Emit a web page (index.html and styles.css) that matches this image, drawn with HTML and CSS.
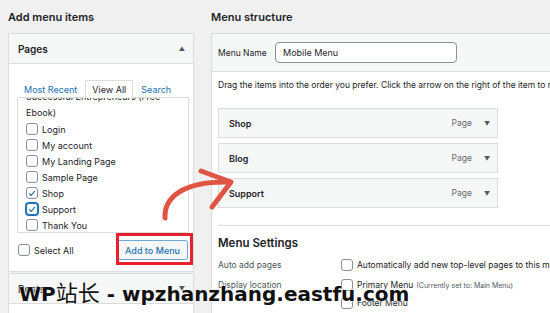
FILE: index.html
```html
<!DOCTYPE html>
<html lang="en">
<head>
    <meta charset="UTF-8">
    <title>Menus</title>
    <link rel="stylesheet" href="styles.css">
</head>
<body>
    <div class="screen">
        <section class="col-left">
            <h2 class="col-title">Add menu items</h2>

            <div class="accordion">
                <div class="acc-head">
                    <span>Pages</span>
                    <span class="caret">&#9650;</span>
                </div>
                <div class="acc-body">
                    <ul class="tabs">
                        <li class="tab-link">Most Recent</li>
                        <li class="tab-active">View All</li>
                        <li class="tab-link">Search</li>
                    </ul>
                    <div class="checklist">
                        <ul class="checklist-inner">
                            <li class="wrap-item">How to Become one of the<br>Successful Entrepreneurs (Free<br>Ebook)</li>
                            <li><span class="cb"></span>Login</li>
                            <li><span class="cb"></span>My account</li>
                            <li><span class="cb"></span>My Landing Page</li>
                            <li><span class="cb"></span>Sample Page</li>
                            <li><span class="cb checked"><svg viewBox="0 0 12 12"><path d="M3 6.2l2 2.2 4-5"/></svg></span>Shop</li>
                            <li><span class="cb checked focus"><svg viewBox="0 0 12 12"><path d="M3 6.2l2 2.2 4-5"/></svg></span>Support</li>
                            <li><span class="cb"></span>Thank You</li>
                        </ul>
                    </div>
                    <div class="acc-footer">
                        <label class="select-all"><span class="cb"></span>Select All</label>
                        <button class="add-btn">Add to Menu</button>
                    </div>
                </div>
            </div>

            <div class="accordion closed">
                <div class="acc-head">
                    <span>Posts</span>
                    <span class="caret">&#9660;</span>
                </div>
                <div class="acc-body short">
                    <span class="muted">Custom Links</span>
                </div>
            </div>
        </section>

        <section class="col-right">
            <h2 class="col-title">Menu structure</h2>

            <div class="menu-box">
                <div class="menu-head">
                    <label class="menu-name-label">Menu Name</label>
                    <div class="menu-name-input">Mobile Menu</div>
                </div>
                <div class="menu-body">
                    <p class="drag-note">Drag the items into the order you prefer. Click the arrow on the right of the item to reveal additional configuration options.</p>

                    <ul class="menu-items">
                        <li class="menu-item"><span class="item-title">Shop</span><span class="item-type">Page</span><span class="item-arrow">&#9660;</span></li>
                        <li class="menu-item"><span class="item-title">Blog</span><span class="item-type">Page</span><span class="item-arrow">&#9660;</span></li>
                        <li class="menu-item"><span class="item-title">Support</span><span class="item-type">Page</span><span class="item-arrow">&#9660;</span></li>
                    </ul>

                    <div class="menu-settings">
                        <h3>Menu Settings</h3>
                        <div class="setting-row">
                            <span class="setting-label">Auto add pages</span>
                            <div class="setting-options">
                                <label class="opt"><span class="cb"></span>Automatically add new top-level pages to this menu</label>
                            </div>
                        </div>
                        <div class="setting-row">
                            <span class="setting-label">Display location</span>
                            <div class="setting-options">
                                <label class="opt"><span class="cb"></span>Primary Menu <small>(Currently set to: Main Menu)</small></label>
                                <label class="opt"><span class="cb"></span>Footer Menu</label>
                                <label class="opt"><span class="cb"></span>Mobile Menu</label>
                            </div>
                        </div>
                    </div>
                </div>
            </div>
        </section>
    </div>

    <!-- annotations drawn over the screenshot -->
    <div class="highlight"></div>
    <svg class="arrow" viewBox="0 0 550 313">
        <path d="M165 218 C164 198 182 181 229 182"/>
        <path d="M201 171 L231 182 L212 207"/>
    </svg>
    <div class="watermark">WP<span class="cjk">站长</span> - wpzhanzhang.eastfu.com</div>
</body>
</html>
```

FILE: styles.css
```css
* {
    margin: 0;
    padding: 0;
    box-sizing: border-box;
}

body {
    width: 550px;
    height: 313px;
    overflow: hidden;
    position: relative;
    background: #f0f0f1;
    color: #1d2327;
    font-family: Inter, 'Noto Sans', sans-serif;
    font-size: 9px;
}

ul {
    list-style: none;
}

.screen {
    display: flex;
    gap: 17px;
    padding-left: 8px;
}

.col-left {
    width: 186px;
    flex: none;
}

.col-right {
    width: 420px;
    flex: none;
}

.col-title {
    height: 33px;
    line-height: 34px;
    font-size: 11px;
    font-weight: 600;
}

/* checkboxes */
.cb {
    width: 12px;
    height: 12px;
    flex: none;
    display: inline-flex;
    align-items: center;
    justify-content: center;
    border: 1px solid #8c8f94;
    border-radius: 3px;
    background: #fff;
    margin-right: 4px;
}

.cb svg {
    width: 11px;
    height: 11px;
    fill: none;
    stroke: #2271b1;
    stroke-width: 1.4;
    stroke-linecap: round;
    stroke-linejoin: round;
}

.cb.focus {
    border-color: #2271b1;
    box-shadow: 0 0 0 1px #2271b1;
}

/* left accordion */
.accordion {
    background: #fff;
    border: 1px solid #dcdcde;
}

.accordion.closed {
    margin-top: 1px;
}

.acc-head {
    height: 30px;
    display: flex;
    align-items: center;
    justify-content: space-between;
    padding: 0 8px 0 9px;
    background: #f6f7f7;
    border-bottom: 1px solid #dcdcde;
    font-size: 10px;
    font-weight: 600;
}

.caret {
    font-size: 6px;
    color: #50575e;
}

.acc-body {
    padding: 16px 4px 11px 8px;
}

.acc-body.short {
    padding: 8px 9px;
}

.muted {
    color: #50575e;
}

.tabs {
    display: flex;
    gap: 1px;
    margin-bottom: -1px;
    position: relative;
}

.tabs li {
    height: 18px;
    line-height: 17px;
    padding: 0 6px;
    border: 1px solid transparent;
    font-size: 9px;
}

.tab-link {
    color: #2271b1;
}

.tab-active {
    border-color: #dcdcde !important;
    border-bottom-color: #fff !important;
    background: #fff;
}

.checklist {
    height: 136px;
    overflow: hidden;
    border: 1px solid #dcdcde;
    padding: 0 8px;
}

.checklist-inner {
    margin-top: -25px;
}

.checklist-inner li {
    height: 16px;
    display: flex;
    align-items: center;
    font-size: 9px;
}

.checklist-inner li.wrap-item {
    height: auto;
    display: block;
    line-height: 16px;
}

.acc-footer {
    display: flex;
    align-items: center;
    justify-content: space-between;
    margin-top: 7px;
    padding: 0 1px 0 1px;
}

.select-all {
    display: flex;
    align-items: center;
}

.add-btn {
    height: 20px;
    padding: 0 7px;
    border: 1px solid #6ea7d6;
    border-radius: 3px;
    background: #f6f7f7;
    color: #2271b1;
    font-family: inherit;
    font-size: 9px;
    font-weight: 500;
}

/* right column */
.menu-box {
    background: #fff;
    border: 1px solid #dcdcde;
    height: 290px;
}

.menu-head {
    height: 38px;
    display: flex;
    align-items: center;
    padding-left: 6px;
    background: #f6f7f7;
    border-bottom: 1px solid #dcdcde;
}

.menu-name-label {
    width: 57px;
    font-size: 8.5px;
    color: #1d2327;
}

.menu-name-input {
    width: 182px;
    height: 21px;
    line-height: 19px;
    padding: 0 7px;
    border: 1px solid #8c8f94;
    border-radius: 4px;
    background: #fff;
    font-size: 9px;
}

.menu-body {
    padding: 7px 0 0 6px;
}

.drag-note {
    white-space: nowrap;
    line-height: 12px;
    font-size: 8.5px;
}

.menu-items {
    margin-top: 17px;
    display: flex;
    flex-direction: column;
    gap: 5px;
    width: 280px;
}

.menu-item {
    height: 30px;
    display: flex;
    align-items: center;
    padding: 0 7px 0 10px;
    background: #f6f7f7;
    border: 1px solid #dcdcde;
}

.item-title {
    flex: 1;
    font-weight: 600;
    font-size: 9px;
}

.item-type {
    color: #646970;
    font-size: 8.5px;
    margin-right: 12px;
}

.item-arrow {
    color: #50575e;
    font-size: 6px;
}

.menu-settings {
    margin-top: 17px;
    border-top: 1px solid #dcdcde;
    padding-top: 10px;
}

.menu-settings h3 {
    font-size: 11.5px;
    font-weight: 600;
    line-height: 14px;
    margin-bottom: 8px;
}

.setting-row {
    display: flex;
    margin-bottom: 6px;
}

.setting-label {
    width: 123px;
    flex: none;
    line-height: 14px;
    color: #50575e;
    font-size: 8.5px;
}

.setting-options {
    display: flex;
    flex-direction: column;
    gap: 4px;
}

.opt {
    display: flex;
    align-items: center;
    height: 14px;
    white-space: nowrap;
    font-size: 8.5px;
}

.opt small {
    font-size: 7px;
    color: #50575e;
    margin-left: 3px;
}

/* overlays */
.highlight {
    position: absolute;
    left: 116px;
    top: 233px;
    width: 77px;
    height: 32px;
    border: 3px solid #e8202e;
}

.arrow {
    position: absolute;
    left: 0;
    top: 0;
    width: 550px;
    height: 313px;
    fill: none;
    stroke: #e05444;
    stroke-width: 5;
    stroke-linecap: round;
    stroke-linejoin: round;
}

.watermark {
    position: absolute;
    left: 19px;
    top: 281px;
    line-height: 20px;
    font-family: 'DejaVu Sans', 'Noto Sans CJK SC', sans-serif;
    font-size: 20px;
    font-weight: bold;
    color: #111;
    white-space: nowrap;
    text-shadow: 0 0 2px #fff, 0 0 2px #fff;
}

.watermark .cjk {
    font-family: 'Noto Sans CJK SC', sans-serif;
    font-weight: 400;
    font-size: 22px;
}
```
